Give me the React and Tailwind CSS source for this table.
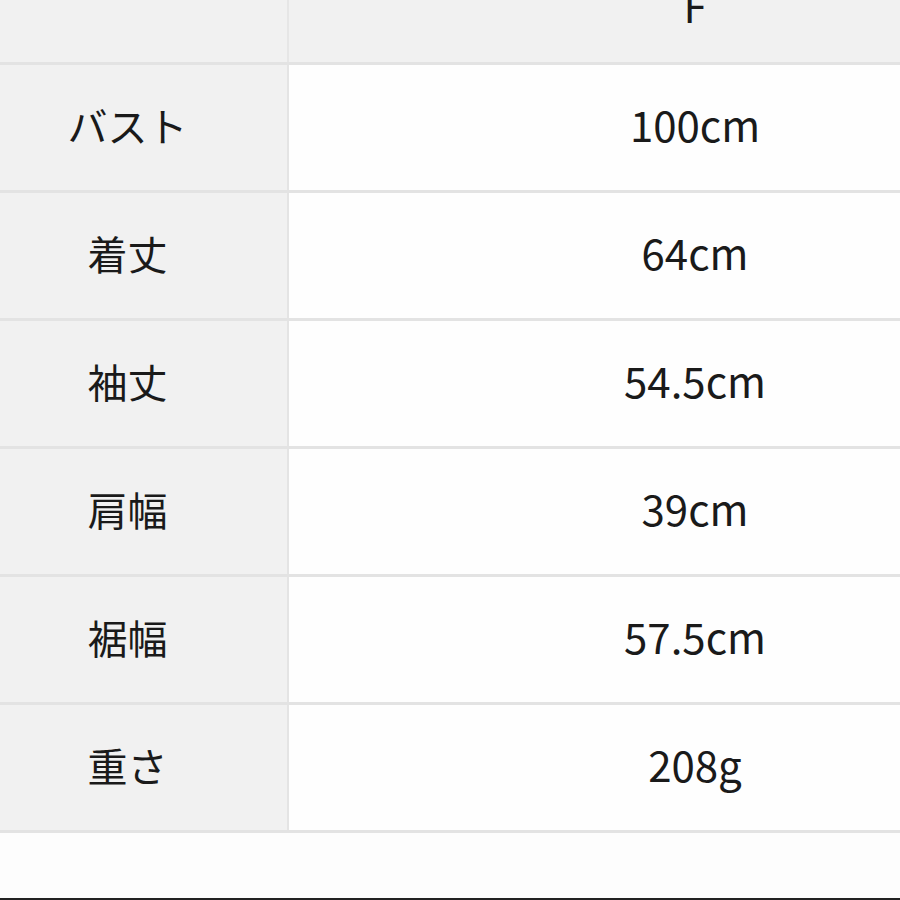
export default function App() {
  const rows = [
    ["バスト", "100cm"],
    ["着丈", "64cm"],
    ["袖丈", "54.5cm"],
    ["肩幅", "39cm"],
    ["裾幅", "57.5cm"],
    ["重さ", "208g"],
  ];
  const font = { fontFamily: '"Noto Sans CJK JP", "Noto Sans", sans-serif' };
  return (
    <div
      className="h-[900px] w-[900px] overflow-hidden bg-[#fdfdfd] flex flex-col text-[#1a1a1a]"
      style={font}
    >
      <div className="mt-[-43px] ml-[-32px] w-[1133px] shrink-0">
        <div className="grid grid-cols-[321px_812px] h-[108px] border-b-[3px] border-[#e3e3e3] bg-[#f1f1f1]">
          <div className="border-r-2 border-[#e6e6e6]" />
          <div className="flex items-center justify-center pb-[10px] text-[42px] leading-none">F</div>
        </div>
        {rows.map(([k, v]) => (
          <div
            key={k}
            className="grid grid-cols-[321px_812px] h-[128px] border-b-[3px] border-[#e3e3e3]"
          >
            <div className="bg-[#f1f1f1] border-r-2 border-[#e4e4e4] flex items-center justify-center pb-[6px] text-[40px] leading-none">
              {k}
            </div>
            <div className="bg-[#fefefe] flex items-center justify-center pb-[8px] text-[42px] leading-none">
              {v}
            </div>
          </div>
        ))}
      </div>
      <div className="flex-1" />
      <div className="h-[2px] bg-[#222] shrink-0" />
    </div>
  );
}
